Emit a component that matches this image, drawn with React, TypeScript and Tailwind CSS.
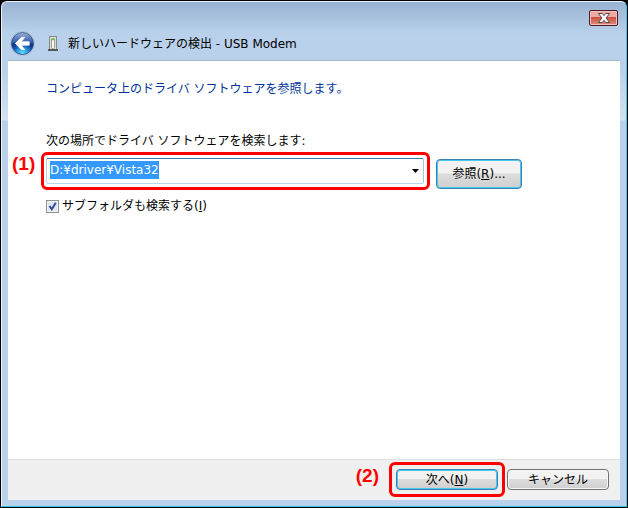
import { useEffect, useRef, useState } from "react";

function BackArrow() {
  return (
    <svg viewBox="0 0 26 26" className="size-[25px]" aria-hidden="true">
      <defs>
        <linearGradient id="orb" x1="0" y1="0" x2="0" y2="1">
          <stop offset="0" stopColor="#a3b4da" />
          <stop offset="0.25" stopColor="#5f7fc0" />
          <stop offset="0.48" stopColor="#2a56a4" />
          <stop offset="0.52" stopColor="#0a2f86" />
          <stop offset="1" stopColor="#1f6cc0" />
        </linearGradient>
        <radialGradient id="glow" cx="0.5" cy="1" r="0.55">
          <stop offset="0" stopColor="#6cecff" />
          <stop offset="0.5" stopColor="#2fb2ee" stopOpacity="0.8" />
          <stop offset="1" stopColor="#1c7fd0" stopOpacity="0" />
        </radialGradient>
      </defs>
      <circle cx="13" cy="13" r="12.5" fill="#d5e0ee" stroke="#9db4d2" strokeWidth="0.8" />
      <circle cx="13" cy="13" r="11.4" fill="url(#orb)" stroke="#24457f" strokeWidth="0.8" />
      <circle cx="13" cy="13" r="11" fill="url(#glow)" />
      <path
        d="M5.5 13 L12 6.6 H15.4 L11.6 11.2 H20 V14.8 H11.6 L15.4 19.4 H12 Z"
        fill="#fff"
        stroke="#fff"
        strokeWidth="0.8"
        strokeLinejoin="round"
      />
    </svg>
  );
}

function DeviceIcon() {
  return (
    <svg viewBox="0 0 10 16" className="h-4 w-2.5" aria-hidden="true">
      <rect x="1.5" y="0.5" width="7" height="13" fill="#dcddd5" stroke="#8b8b86" />
      <rect x="3.5" y="3" width="3" height="9.5" rx="1" fill="#f7f7f2" stroke="#8e9088" strokeWidth="0.8" />
      <path d="M3.6 4.6 Q3.6 2.8 5 2.8 Q6.4 2.8 6.4 4.6" fill="none" stroke="#55b83c" strokeWidth="1.2" />
      <rect x="0" y="13" width="10" height="2" fill="#55575a" />
    </svg>
  );
}

function CloseGlyph() {
  return (
    <svg viewBox="0 0 12 10" className="h-2.5 w-3" aria-hidden="true">
      <path
        d="M0.5 0.5 H4.3 L6 2.6 L7.7 0.5 H11.5 L8.2 5 L11.5 9.5 H7.7 L6 7.4 L4.3 9.5 H0.5 L3.8 5 Z"
        fill="#f6f6f6"
        stroke="#57484d"
        strokeWidth="1"
        strokeLinejoin="round"
      />
    </svg>
  );
}

export default function App() {
  const [path, setPath] = useState("D:¥driver¥Vista32");
  const [subfolders, setSubfolders] = useState(true);
  const pathRef = useRef<HTMLInputElement>(null);

  useEffect(() => {
    pathRef.current?.focus();
    pathRef.current?.select();
  }, []);

  return (
    <div className="bg-black p-px font-['DejaVu_Sans','Noto_Sans_CJK_JP',sans-serif] text-xs leading-4 text-black">
      <div className="flex min-h-[506px] flex-col rounded-t-md border border-t-[#edf3fa] border-r-[#35cdea] border-b-[#28c6e0] border-l-[#edf3fa] bg-[linear-gradient(#98b3d2,#b9d1ea_32px,#b9d1ea_66px,#d3e1f2_118px,#b9d1ea_119px)] px-1.5 pb-1.5">
        <header className="flex h-[58px] flex-col">
          <div className="flex justify-end pt-2 pr-0.5">
            <button
              type="button"
              aria-label="閉じる"
              className="flex h-4 w-[29px] items-center justify-center rounded-xs border border-[#4e1d2b] bg-linear-to-b from-[#eea9a2] from-40% via-[#c9513c] via-45% to-[#df8a7c] shadow-[inset_0_0_0_1px_#f3c0b9]"
            >
              <CloseGlyph />
            </button>
          </div>
          <div className="flex items-center pt-[5px] pl-0.5">
            <button type="button" aria-label="戻る" className="rounded-full">
              <BackArrow />
            </button>
            <div className="ml-[13px]">
              <DeviceIcon />
            </div>
            <h1 className="ml-2.5">新しいハードウェアの検出 - USB Modem</h1>
          </div>
        </header>

        <main className="flex-1 border-t border-[#a0bad7] bg-white px-8">
          <h2 className="ml-1.5 pt-5 text-[#003399]">コンピュータ上のドライバ ソフトウェアを参照します。</h2>
          <label htmlFor="path" className="mt-9 ml-1.5 block">
            次の場所でドライバ ソフトウェアを検索します:
          </label>
          <div className="mt-[3px] flex">
            <span className="-ml-7 w-[29px] font-['Liberation_Sans',sans-serif] text-[19px] leading-6 font-bold text-[#ff0000]">(1)</span>
            <div className="w-[389px] rounded-md border-[3px] border-[#ff0000] py-[3px] pr-[3px] pl-0.5">
              <div className="flex h-[26px] items-start rounded-xs border border-t-[#3d7bad] border-r-[#a4c9e3] border-b-[#b7d9ed] border-l-[#b5cfe7] bg-white">
                <input
                  id="path"
                  ref={pathRef}
                  value={path}
                  onChange={(e) => setPath(e.target.value)}
                  className="mt-0.5 ml-[3px] h-[18px] min-w-0 flex-1 leading-[18px] outline-none selection:bg-[#3399ff] selection:text-white"
                />
                <button type="button" aria-label="一覧を開く" className="flex h-full w-4 items-center justify-center">
                  <svg viewBox="0 0 7 4" className="h-1 w-[7px]" aria-hidden="true">
                    <path d="M0 0 H7 L3.5 4 Z" />
                  </svg>
                </button>
              </div>
            </div>
            <button
              type="button"
              className="mb-px ml-1.5 h-[30px] w-[86px] self-end rounded-sm border border-[#3c7fb1] bg-linear-to-b from-[#f2f2f2] from-45% via-[#dddddd] via-50% to-[#cfcfcf] shadow-[inset_0_0_0_1px_#48c8f0]"
            >
              参照(<u>R</u>)...
            </button>
          </div>
          <label className="mt-2 ml-1.5 flex w-fit items-center gap-[3px]">
            <span className="relative size-[13px]">
              <input
                type="checkbox"
                checked={subfolders}
                onChange={(e) => setSubfolders(e.target.checked)}
                className="peer block size-[13px] appearance-none border border-[#8e8f8f] bg-[#dfe5ec] shadow-[inset_0_0_0_1px_#f4f4f4]"
              />
              <svg viewBox="0 0 13 13" className="pointer-events-none absolute inset-0 hidden size-[13px] peer-checked:block" aria-hidden="true">
                <path d="M3.5 6 L5.8 9.3 L9.8 2.8" fill="none" stroke="#31479b" strokeWidth="2" />
              </svg>
            </span>
            <span>
              サブフォルダも検索する(<u>I</u>)
            </span>
          </label>
        </main>

        <footer className="flex h-[41px] items-center justify-end border-t border-[#dfdfdf] bg-[#f0f0f0] pr-[11px] pb-px">
          <span className="mr-2.5 pb-2 font-['Liberation_Sans',sans-serif] text-[19px] leading-6 font-bold text-[#ff0000]">(2)</span>
          <div className="rounded-md border-[3px] border-[#ff0000] p-1">
            <button
              type="button"
              className="block h-[21px] w-[102px] rounded-sm border border-[#3c7fb1] bg-linear-to-b from-[#f2f2f2] from-45% via-[#dddddd] via-50% to-[#cfcfcf] shadow-[inset_0_0_0_1px_#48c8f0]"
            >
              次へ(<u>N</u>)
            </button>
          </div>
          <button
            type="button"
            className="ml-0.5 h-[21px] w-[102px] rounded-sm border border-[#707070] bg-linear-to-b from-[#f2f2f2] from-45% via-[#dddddd] via-50% to-[#cfcfcf] shadow-[inset_0_0_0_1px_#f8f8f8]"
          >
            キャンセル
          </button>
        </footer>
      </div>
    </div>
  );
}
